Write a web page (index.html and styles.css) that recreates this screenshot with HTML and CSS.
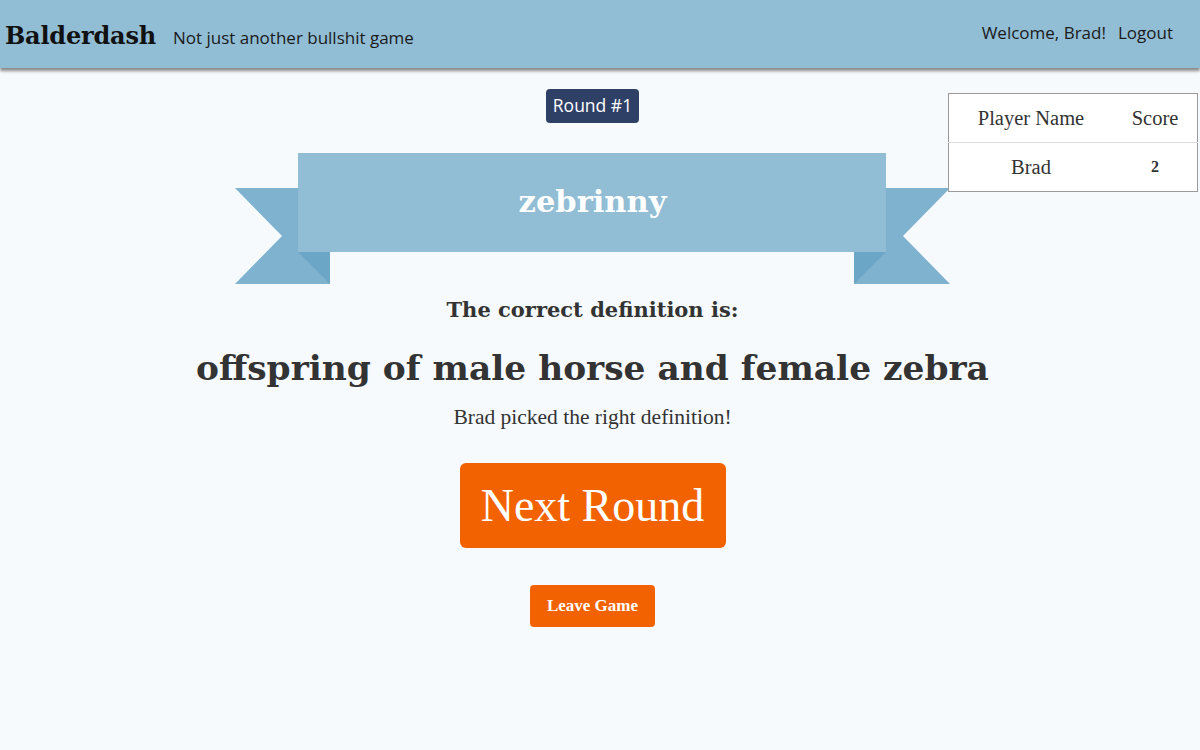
FILE: index.html
```html
<!DOCTYPE html>
<html>
<head>
<meta charset="utf-8">
<link rel="stylesheet" href="styles.css">
</head>
<body>
<header class="navbar">
  <div class="brand-group">
    <span class="brand">Balderdash</span>
    <span class="tagline">Not just another bullshit game</span>
  </div>
  <div class="user-group">
    <span class="welcome">Welcome, Brad!</span>
    <span class="logout">Logout</span>
  </div>
</header>
<main class="main">
  <div class="round-badge">Round #1</div>
  <div class="ribbon">
    <svg class="ribbon-svg" width="715" height="131" viewBox="0 0 715 131">
      <polygon points="0,35 95,35 95,131 0,131 47,83" fill="#7eb2cf"/>
      <polygon points="63,99 95,99 95,131" fill="#6ba6c6"/>
      <polygon points="619,35 715,35 668,83 715,131 619,131" fill="#7eb2cf"/>
      <polygon points="651,99 619,99 619,131" fill="#6ba6c6"/>
      <rect x="63" y="0" width="588" height="99" fill="#91bdd5"/>
    </svg>
    <div class="ribbon-label">zebrinny</div>
  </div>
  <div class="correct-label">The correct definition is:</div>
  <div class="definition">offspring of male horse and female zebra</div>
  <div class="result">Brad picked the right definition!</div>
  <button class="btn btn-big">Next Round</button>
  <button class="btn btn-small">Leave Game</button>
</main>
<table class="scores">
  <thead>
    <tr><th class="col-name">Player Name</th><th>Score</th></tr>
  </thead>
  <tbody>
    <tr><td>Brad</td><td class="num">2</td></tr>
  </tbody>
</table>
</body>
</html>
```
FILE: styles.css
```css
html, body {
  margin: 0;
  padding: 0;
}
body {
  background: #f6fafd;
  font-family: "Liberation Serif", "Times New Roman", serif;
  color: #333;
  width: 1200px;
  height: 750px;
  overflow: hidden;
  position: relative;
}
.navbar {
  height: 68px;
  background: #91bdd5;
  box-shadow: 0 3px 3px #8a8a8a;
  display: flex;
  justify-content: space-between;
  align-items: center;
  padding: 0 27px 0 5px;
  box-sizing: border-box;
}
.brand-group {
  display: flex;
  align-items: baseline;
  gap: 17px;
  margin-top: 2px;
}
.brand {
  font-family: "DejaVu Serif", serif;
  font-weight: bold;
  font-size: 24px;
  color: #111;
  letter-spacing: -0.2px;
}
.tagline, .welcome, .logout {
  font-family: "Open Sans", "Noto Sans", sans-serif;
  font-size: 17px;
  color: #1a1a1a;
}
.user-group {
  display: flex;
  gap: 12px;
  margin-top: -4px;
}
.main {
  width: 1185px;
  display: flex;
  flex-direction: column;
  align-items: center;
  padding-top: 21px;
}
.round-badge {
  background: #2f4067;
  color: #fff;
  font-family: "Open Sans", "Noto Sans", sans-serif;
  font-size: 17.5px;
  height: 34px;
  line-height: 33px;
  padding: 0 7px;
  border-radius: 4px;
  box-sizing: border-box;
}
.ribbon {
  margin-top: 30px;
  display: grid;
  width: 715px;
  height: 131px;
}
.ribbon-svg {
  grid-area: 1 / 1;
  display: block;
}
.ribbon-label {
  grid-area: 1 / 1;
  height: 96px;
  display: flex;
  align-items: center;
  justify-content: center;
  font-family: "DejaVu Serif", serif;
  font-weight: bold;
  font-size: 30.5px;
  color: #fff;
}
.correct-label {
  margin-top: 12px;
  font-family: "DejaVu Serif", serif;
  font-weight: bold;
  font-size: 21px;
  line-height: 28px;
  color: #333;
}
.definition {
  margin-top: 24px;
  font-family: "DejaVu Serif", serif;
  font-weight: bold;
  font-size: 34.4px;
  line-height: 44px;
  color: #333;
  transform: translateY(-2px);
}
.result {
  margin-top: 12px;
  font-size: 21.5px;
  line-height: 26px;
  color: #333;
}
.btn {
  border: none;
  background: #f26200;
  color: #fff;
  font-family: "Liberation Serif", serif;
  cursor: pointer;
}
.btn-big {
  margin-top: 33px;
  width: 266px;
  height: 85px;
  border-radius: 6px;
  font-size: 46px;
}
.btn-small {
  margin-top: 37px;
  width: 125px;
  height: 42px;
  border-radius: 4px;
  font-size: 17px;
  font-weight: bold;
}
.scores {
  position: absolute;
  top: 93px;
  right: 2px;
  width: 250px;
  border-collapse: collapse;
  background: #fff;
  border: 1px solid #9a9a9a;
  font-size: 20.5px;
  color: #333;
}
.scores .col-name {
  width: 164px;
}
.scores th {
  font-weight: normal;
  height: 48px;
  border-bottom: 1px solid #ddd;
  padding: 0;
}
.scores td {
  height: 48px;
  text-align: center;
  padding: 0;
}
.scores .num {
  font-size: 16px;
  font-weight: bold;
}
```
